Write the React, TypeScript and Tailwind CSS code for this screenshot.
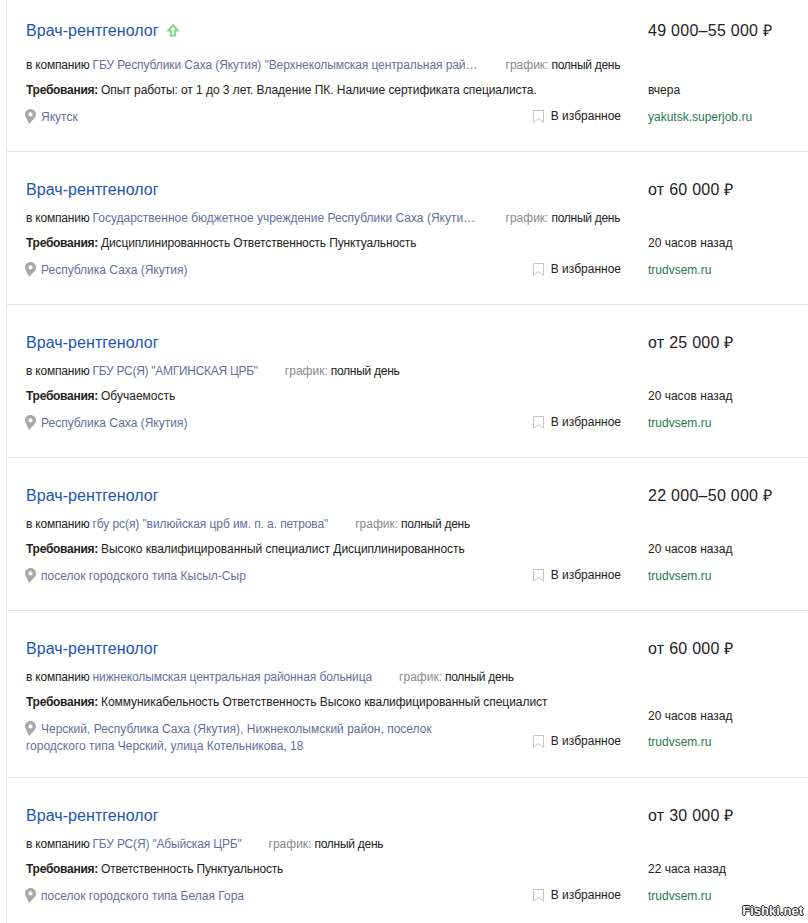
const jobs = [
  { first: true, salary: "49 000–55 000 ₽", companyCls: "tracking-[-0.09px]", reqCls: "tracking-[-0.055px]", company: 'ГБУ Республики Саха (Якутия) "Верхнеколымская центральная районная больница"', req: "Опыт работы: от 1 до 3 лет. Владение ПК. Наличие сертификата специалиста.", loc: "Якутск", date: "вчера", src: "yakutsk.superjob.ru" },
  { salary: "от 60 000 ₽", companyCls: "", reqCls: "tracking-[-0.14px]", company: "Государственное бюджетное учреждение Республики Саха (Якутия) центральная больница", req: "Дисциплинированность Ответственность Пунктуальность", loc: "Республика Саха (Якутия)", date: "20 часов назад", src: "trudvsem.ru" },
  { salary: "от 25 000 ₽", companyCls: "tracking-[-0.28px]", reqCls: "", company: 'ГБУ РС(Я) "АМГИНСКАЯ ЦРБ"', req: "Обучаемость", loc: "Республика Саха (Якутия)", date: "20 часов назад", src: "trudvsem.ru" },
  { salary: "22 000–50 000 ₽", companyCls: "tracking-[-0.09px]", reqCls: "tracking-[-0.02px]", company: 'гбу рс(я) "вилюйская црб им. п. а. петрова"', req: "Высоко квалифицированный специалист Дисциплинированность", loc: "поселок городского типа Кысыл-Сыр", date: "20 часов назад", src: "trudvsem.ru" },
  { tall: true, salary: "от 60 000 ₽", companyCls: "tracking-[-0.09px]", reqCls: "tracking-[-0.055px]", company: "нижнеколымская центральная районная больница", req: "Коммуникабельность Ответственность Высоко квалифицированный специалист", loc: "Черский, Республика Саха (Якутия), Нижнеколымский район, поселок городского типа Черский, улица Котельникова, 18", date: "20 часов назад", src: "trudvsem.ru" },
  { salary: "от 30 000 ₽", companyCls: "tracking-[-0.17px]", reqCls: "tracking-[-0.17px]", company: 'ГБУ РС(Я) "Абыйская ЦРБ"', req: "Ответственность Пунктуальность", loc: "поселок городского типа Белая Гора", date: "22 часа назад", src: "trudvsem.ru" },
];

function Pin() {
  return (
    <svg width="11" height="15" viewBox="0 0 11 15" className="float-left -ml-px mr-[5px]">
      <path fillRule="evenodd" fill="#a8a8a8" d="M5.5 0C2.5 0 0 2.3 0 5.3c0 1.5.6 2.6 1.3 3.7L4 15l5.7-6c.8-1.1 1.3-2.2 1.3-3.7C11 2.3 8.5 0 5.5 0zm0 3.3a2.1 2.1 0 1 1 0 4.2 2.1 2.1 0 0 1 0-4.2z" />
    </svg>
  );
}

function Bookmark() {
  return (
    <svg width="11" height="13" viewBox="0 0 11 13" className="shrink-0">
      <path d="M.5.5h10v11.8L5.5 8.6.5 12.3z" fill="none" stroke="#c4c4c4" />
    </svg>
  );
}

function UpArrow() {
  return (
    <svg width="12" height="13" viewBox="0 0 12 13">
      <path d="M6 1.2 11 6.6H8.2v5H3.8v-5H1z" fill="none" stroke="#7fdc85" strokeWidth="2" />
    </svg>
  );
}

export default function App() {
  return (
    <div className="relative h-[923px] w-[808px] overflow-hidden bg-white font-['Liberation_Sans',Arial,sans-serif] text-[12px] text-[#222]">
      <div className="ml-[6px] border-l border-[#e4e4e4]">
        {jobs.map((j, i) => (
          <div key={i} className={`flex border-b border-[#e4e4e4] pl-[19px] ${j.first ? "pt-[19px]" : "pt-[26px]"} ${j.tall ? "pb-[22px]" : "pb-[25px]"}`}>
            <div className="w-[595px] shrink-0">
              <div className="flex h-[22px] items-center gap-[8px]">
                <a className="pt-[2px] text-[16px] tracking-[0.06px] text-[#1c55b5]">Врач-рентгенолог</a>
                {j.first && <UpArrow />}
              </div>
              <div className={`flex h-5 items-center whitespace-nowrap pt-[2px] ${j.first ? "mt-[13px]" : "mt-[7px]"}`}>
                <span className="mr-[3px] tracking-[-0.2px]">в компанию</span>
                <a className={`block max-w-[386px] truncate text-[#646f9c] ${j.companyCls}`}>{j.company}</a>
                <span className="ml-[27px] text-[#8a8a8a]">график:</span>
                <span className="ml-[3px] tracking-[-0.27px]">полный день</span>
              </div>
              <div className="mt-[5px] flex h-5 items-center whitespace-nowrap pt-[2px]">
                <b className="mr-[3px] font-bold tracking-[-0.27px]">Требования:</b>
                <span className={j.reqCls}>{j.req}</span>
              </div>
              <div className="mt-[7px] flex justify-between">
                <div className="w-[420px] pt-[3px] leading-[17px] text-[#646f9c]">
                  <Pin />
                  {j.loc}
                </div>
                <div className={`flex h-5 items-center gap-[7px] ${j.tall ? "mt-[13px]" : ""}`}>
                  <Bookmark />
                  <span>В избранное</span>
                </div>
              </div>
            </div>
            <div className="ml-[27px] flex flex-1 flex-col justify-between">
              <div className="flex h-[22px] items-center pt-[2px] text-[16px] tracking-[0.27px] text-[#222]">{j.salary}</div>
              <div className={j.tall ? "mb-[4px]" : ""}>
                <div className="flex h-5 items-center pt-[2px]">{j.date}</div>
                <div className={`flex h-5 items-center pt-[2px] text-[#1f7a4d] ${j.tall ? "mt-[6px]" : "mt-[7px]"}`}>{j.src}</div>
              </div>
            </div>
          </div>
        ))}
      </div>
      <div className="absolute bottom-[4px] right-[5px] text-[13px] font-bold leading-[16px] text-white [text-shadow:-1px_0_#222,1px_0_#222,0_-1px_#222,0_1px_#222]">
        Fishki.net
      </div>
    </div>
  );
}
